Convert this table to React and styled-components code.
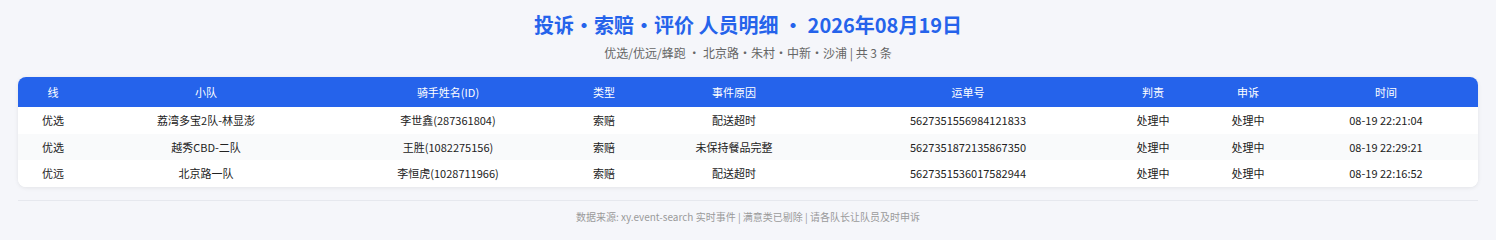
import React from 'react';
import styled, { createGlobalStyle } from 'styled-components';

const GlobalStyle = createGlobalStyle`
  html, body {
    margin: 0;
    padding: 0;
    background: #f5f6fa;
    font-family: "Noto Sans CJK SC", "Noto Sans", sans-serif;
  }
`;

const Page = styled.div`
  padding: 11px 18px 0;
`;

const Title = styled.h1`
  margin: 0;
  text-align: center;
  font-size: 20px;
  line-height: 28px;
  font-weight: 700;
  color: #2563eb;
`;

const Subtitle = styled.div`
  margin-top: 5px;
  text-align: center;
  font-size: 12px;
  line-height: 18px;
  color: #666;
`;

const Card = styled.div`
  margin-top: 15px;
  background: #fff;
  border-radius: 8px;
  overflow: hidden;
  box-shadow: 0 1px 4px rgba(0, 0, 0, 0.08);
`;

const Table = styled.table`
  width: 100%;
  border-collapse: collapse;
  table-layout: fixed;
  font-size: 11px;
  color: #222;
`;

const Th = styled.th`
  background: #2563eb;
  color: #fff;
  font-weight: 400;
  height: 30px;
  padding: 0 6px;
  text-align: center;
`;

const Row = styled.tr`
  background: ${p => (p.$striped ? '#f9fafb' : '#fff')};
  & + & td {
    border-top: 1px solid #ececec;
  }
`;

const Td = styled.td`
  height: 26.5px;
  padding: 0 6px;
  text-align: center;
  white-space: nowrap;
`;

const Divider = styled.hr`
  margin: 13px 0 0;
  border: 0;
  border-top: 1px solid #e6e8ee;
`;

const Footer = styled.div`
  text-align: center;
  font-size: 10px;
  line-height: 16px;
  padding-top: 8px;
  color: #9a9a9a;
`;

const columns = [
  { label: '线', width: 70 },
  { label: '小队', width: 236 },
  { label: '骑手姓名(ID)', width: 248 },
  { label: '类型', width: 64 },
  { label: '事件原因', width: 196 },
  { label: '运单号', width: 272 },
  { label: '判责', width: 98 },
  { label: '申诉', width: 92 },
  { label: '时间', width: 184 },
];

const rows = [
  ['优选', '荔湾多宝2队-林显澎', '李世鑫(287361804)', '索赔', '配送超时', '5627351556984121833', '处理中', '处理中', '08-19 22:21:04'],
  ['优选', '越秀CBD-二队', '王胜(1082275156)', '索赔', '未保持餐品完整', '5627351872135867350', '处理中', '处理中', '08-19 22:29:21'],
  ['优远', '北京路一队', '李恒虎(1028711966)', '索赔', '配送超时', '5627351536017582944', '处理中', '处理中', '08-19 22:16:52'],
];

export default function App() {
  return (
    <Page>
      <GlobalStyle />
      <Title>投诉・索赔・评价 人员明细 ・ 2026年08月19日</Title>
      <Subtitle>优选/优远/蜂跑 ・ 北京路·朱村·中新·沙浦 | 共 3 条</Subtitle>
      <Card>
        <Table>
          <colgroup>
            {columns.map(c => <col key={c.label} style={{ width: c.width }} />)}
          </colgroup>
          <thead>
            <tr>
              {columns.map(c => <Th key={c.label}>{c.label}</Th>)}
            </tr>
          </thead>
          <tbody>
            {rows.map((r, i) => (
              <Row key={i} $striped={i % 2 === 1}>
                {r.map((cell, j) => <Td key={j}>{cell}</Td>)}
              </Row>
            ))}
          </tbody>
        </Table>
      </Card>
      <Divider />
      <Footer>数据来源: xy.event-search 实时事件 | 满意类已剔除 | 请各队长让队员及时申诉</Footer>
    </Page>
  );
}
